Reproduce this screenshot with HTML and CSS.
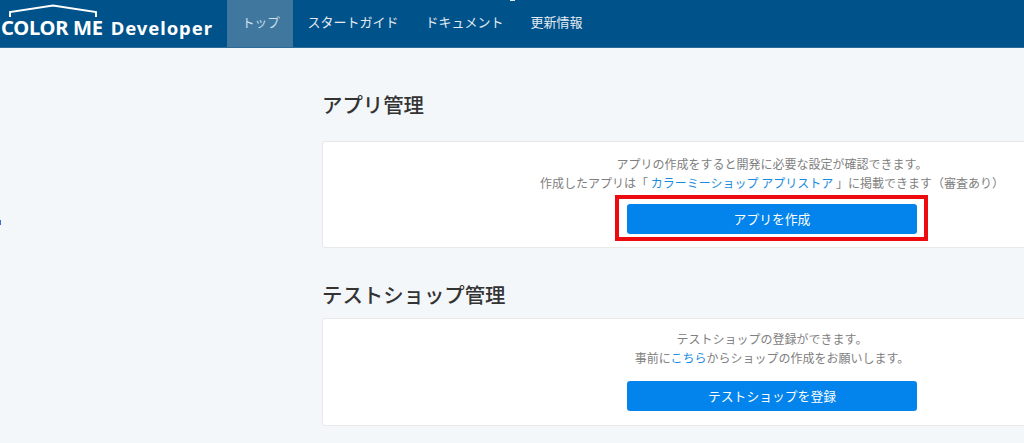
FILE: index.html
```html
<!DOCTYPE html>
<html lang="ja">
<head>
<meta charset="utf-8">
<title>COLOR ME Developer</title>
<link rel="stylesheet" href="styles.css">
</head>
<body>
<header class="header">
  <a class="logo" href="#">
    <svg class="roof" width="88" height="14" viewBox="0 0 88 14"><path d="M1 13V8L44 1.5L87 8V13" fill="none" stroke="#fff" stroke-width="2"/></svg>
    <span class="logo-main">COLOR ME</span><span class="logo-sub">Developer</span>
  </a>
  <nav class="nav">
    <a class="nav-item active" href="#">トップ</a>
    <a class="nav-item" href="#">スタートガイド</a>
    <a class="nav-item" href="#">ドキュメント</a>
    <a class="nav-item" href="#">更新情報</a>
  </nav>
</header>
<span class="top-mark"></span>
<span class="side-mark"></span>
<main class="main">
  <section class="section">
    <h2 class="title">アプリ管理</h2>
    <div class="card">
      <p class="text">アプリの作成をすると開発に必要な設定が確認できます。<br>作成したアプリは「 <a class="link" href="#">カラーミーショップ アプリストア</a> 」に掲載できます（審査あり）</p>
      <span class="btn-wrap"><a class="btn" href="#">アプリを作成</a><span class="highlight"></span></span>
    </div>
  </section>
  <section class="section second">
    <h2 class="title">テストショップ管理</h2>
    <div class="card">
      <p class="text">テストショップの登録ができます。<br>事前に<a class="link" href="#">こちら</a>からショップの作成をお願いします。</p>
      <span class="btn-wrap"><a class="btn" href="#">テストショップを登録</a></span>
    </div>
  </section>
</main>
</body>
</html>
```
FILE: styles.css
```css
* { box-sizing: border-box; }
html, body { margin: 0; height: 443px; overflow: hidden; }
body {
  background: #f4f7fa;
  color: #333;
  font-family: "Noto Sans CJK JP", "Noto Sans", sans-serif;
  position: relative;
}
a { text-decoration: none; }
.header {
  height: 48px;
  background: #00528a;
  display: flex;
  border-bottom: 1px solid #2d6c99;
}
.logo {
  width: 227px;
  flex: none;
  position: relative;
  color: #fff;
  display: flex;
  align-items: baseline;
  padding: 14px 0 0 1px;
  white-space: nowrap;
  font-family: "Noto Sans", sans-serif;
  line-height: 27px;
}
.roof { position: absolute; left: 9px; top: 4px; }
.logo-main { font-size: 20.2px; letter-spacing: -0.3px; font-weight: 700; }
.logo-sub { font-size: 18.5px; margin-left: 8px; letter-spacing: 0.9px; font-weight: 700; }
.nav { display: flex; height: 47px; }
.nav-item {
  color: #e3ebf2;
  font-size: 13px;
  line-height: 43px;
  padding: 0 13.5px;
  white-space: nowrap;
}
.nav-item.active {
  background: #40779f;
  color: #cfe0ec;
  padding: 0 0 0 15px;
  width: 66px;
  margin-right: 1px;
  font-size: 12.6px;
}
.top-mark { position: absolute; left: 510px; top: 0; width: 5px; height: 1px; background: #dfe8ef; }
.side-mark { position: absolute; left: 0; top: 220px; width: 1px; height: 5px; background: #3b6fd0; }
.main { margin-left: 322px; width: 900px; padding-top: 39px; }
.title {
  margin: 0;
  font-size: 20.4px;
  font-weight: 500;
  line-height: 34px;
  color: #333;
}
.section .card { margin-top: 20px; }
.second { margin-top: 29px; }
.second .card { margin-top: 7px; height: 108px; }
.card {
  background: #fff;
  border: 1px solid #e6e8ea;
  border-radius: 3px;
  height: 107px;
  padding: 12px 0 0;
  text-align: center;
}
.second .card { padding-top: 10px; }
.text {
  margin: 0;
  font-size: 12px;
  line-height: 19px;
  color: #808080;
}
.link { color: #1a8cdf; }
.btn-wrap { display: inline-block; position: relative; margin-top: 12px; vertical-align: top; }
.second .btn-wrap { margin-top: 14px; }
.btn {
  display: block;
  width: 290px;
  height: 30px;
  line-height: 29px;
  background: #0284ec;
  border-radius: 3px;
  color: #fff;
  font-size: 12.8px;
  font-weight: 400;
  text-align: center;
}
.highlight {
  position: absolute;
  left: -12px;
  top: -9px;
  width: 313px;
  height: 46px;
  border: 4px solid #ee0b0f;
}
```
